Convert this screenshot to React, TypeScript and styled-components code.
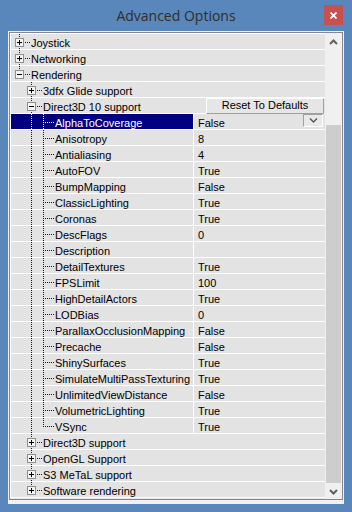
import React from "react";
import styled, { createGlobalStyle } from "styled-components";

const Global = createGlobalStyle`
  html, body { margin: 0; padding: 0; background: #5a87bb; }
  body { width: 352px; height: 512px; overflow: hidden; font-family: "Liberation Sans", Arial, sans-serif; }
`;

const Window = styled.div`
  width: 352px;
  height: 512px;
  box-sizing: border-box;
  background: #5a87bb;
  display: flex;
  flex-direction: column;
  padding: 0 8px 8px;
`;

const TitleBar = styled.div`
  height: 31px;
  flex: none;
  display: grid;
  grid-template-columns: 1fr auto 1fr;
  align-items: start;
`;

const Title = styled.div`
  grid-column: 2;
  font-family: "Open Sans", "Noto Sans", sans-serif;
  font-size: 14px;
  line-height: 31px;
  color: #2e2e2e;
  white-space: nowrap;
`;

const CloseButton = styled.div`
  grid-column: 3;
  justify-self: end;
  margin-top: 5px;
  margin-right: 1px;
  width: 19px;
  height: 20px;
  background: #c75050;
  display: flex;
  align-items: center;
  justify-content: center;
`;

const Client = styled.div`
  flex: 1;
  min-height: 0;
  background: #f0f0f0;
  padding: 1px 1px 4px 1px;
  display: flex;
`;

const Panel = styled.div`
  flex: 1;
  border: 1px solid #828790;
  display: flex;
  min-height: 0;
`;

const List = styled.div`
  flex: 1;
  border-top: 1px solid #fff;
  background: #e3e3e3;
  display: flex;
  flex-direction: column;
  overflow: hidden;
`;

const Row = styled.div`
  display: flex;
  flex: none;
  height: 16px;
  box-sizing: border-box;
  border-bottom: 1px solid #fff;
  border-left: 1px solid #fff;
  background: #e3e3e3;
  font-size: 11px;
  color: #000;
`;

const NameCell = styled.div<{ $selected?: boolean; $wide?: boolean }>`
  display: flex;
  align-items: flex-start;
  ${(p) => (p.$wide ? "flex: 1;" : "width: 182px; flex: none;")}
  background: ${(p) => (p.$selected ? "#000080" : "transparent")};
  color: ${(p) => (p.$selected ? "#fff" : "#000")};
  min-width: 0;
`;

const Label = styled.span`
  line-height: 14px;
  padding-top: 2px;
  white-space: nowrap;
`;

const ValueCell = styled.div`
  flex: 1;
  display: flex;
  align-items: flex-start;
  justify-content: space-between;
  border-left: 1px solid #fff;
  padding-left: 4px;
`;

const DropButton = styled.div`
  width: 18px;
  height: 11px;
  margin-right: 2px;
  border: 1px solid;
  border-color: #a0a0a0 #fff #fff #a0a0a0;
  background: #e9e9e9;
  display: flex;
  align-items: center;
  justify-content: center;
`;

const ResetButton = styled.div`
  width: 116px;
  height: 14px;
  margin-right: 1px;
  border: 1px solid;
  border-color: #fff #a0a0a0 #a0a0a0 #fff;
  background: #e6e6e6;
  font-size: 11px;
  line-height: 13px;
  text-align: center;
  white-space: nowrap;
  color: #000;
`;

const ScrollBar = styled.div`
  width: 17px;
  flex: none;
  background: #f0f0f0;
  display: flex;
  flex-direction: column;
`;

const ScrollArrow = styled.div`
  height: 17px;
  flex: none;
  display: flex;
  align-items: center;
  justify-content: center;
`;

const Track = styled.div`
  flex: 1;
  display: flex;
  flex-direction: column;
  padding-top: 75px;
`;

const Thumb = styled.div`
  height: 358px;
  margin: 0 1px;
  background: #cdcdcd;
`;

type Item = {
  label: string;
  level: number;
  node?: boolean;
  expanded?: boolean;
  hasNext: boolean;
  cont: boolean[];
  value?: string;
  selected?: boolean;
  reset?: boolean;
};

const props: [string, string][] = [
  ["AlphaToCoverage", "False"],
  ["Anisotropy", "8"],
  ["Antialiasing", "4"],
  ["AutoFOV", "True"],
  ["BumpMapping", "False"],
  ["ClassicLighting", "True"],
  ["Coronas", "True"],
  ["DescFlags", "0"],
  ["Description", ""],
  ["DetailTextures", "True"],
  ["FPSLimit", "100"],
  ["HighDetailActors", "True"],
  ["LODBias", "0"],
  ["ParallaxOcclusionMapping", "False"],
  ["Precache", "False"],
  ["ShinySurfaces", "True"],
  ["SimulateMultiPassTexturing", "True"],
  ["UnlimitedViewDistance", "False"],
  ["VolumetricLighting", "True"],
  ["VSync", "True"],
];

const items: Item[] = [
  { label: "Joystick", level: 0, node: true, hasNext: true, cont: [] },
  { label: "Networking", level: 0, node: true, hasNext: true, cont: [] },
  { label: "Rendering", level: 0, node: true, expanded: true, hasNext: false, cont: [] },
  { label: "3dfx Glide support", level: 1, node: true, hasNext: true, cont: [false] },
  { label: "Direct3D 10 support", level: 1, node: true, expanded: true, hasNext: true, cont: [false], reset: true },
  ...props.map(([label, value], i) => ({
    label,
    value,
    level: 2,
    hasNext: i < props.length - 1,
    cont: [false, true],
    selected: i === 0,
  })),
  { label: "Direct3D support", level: 1, node: true, hasNext: true, cont: [false] },
  { label: "OpenGL Support", level: 1, node: true, hasNext: true, cont: [false] },
  { label: "S3 MeTaL support", level: 1, node: true, hasNext: true, cont: [false] },
  { label: "Software rendering", level: 1, node: true, hasNext: false, cont: [false] },
];

function Gutter({ item }: { item: Item }) {
  const w = 20 + 12 * item.level;
  const cx = 8 + 12 * item.level;
  const col = item.selected ? "#ffffff" : "#1a1a1a";
  const segs: React.ReactNode[] = [];
  const dot = { stroke: col, strokeWidth: 1, strokeDasharray: "1 1" };
  item.cont.forEach((c, a) => {
    if (c) {
      const x = 8 + 12 * a + 0.5;
      segs.push(<line key={"c" + a} x1={x} y1={0} x2={x} y2={16} {...dot} />);
    }
  });
  const x = cx + 0.5;
  if (item.node) {
    segs.push(<line key="t" x1={x} y1={0} x2={x} y2={4} {...dot} />);
    if (item.hasNext) segs.push(<line key="b" x1={x} y1={14} x2={x} y2={16} {...dot} />);
    segs.push(<line key="h" x1={cx + 6} y1={8.5} x2={w - 1} y2={8.5} {...dot} />);
    segs.push(
      <rect key="box" x={cx - 4 + 0.5} y={4.5} width={8} height={8} fill="#f4f4f4" stroke="#8e8f8f" />
    );
    segs.push(<line key="m" x1={cx - 2} y1={8.5} x2={cx + 3} y2={8.5} stroke="#000" />);
    if (!item.expanded) segs.push(<line key="p" x1={x} y1={6} x2={x} y2={11} stroke="#000" />);
  } else {
    segs.push(<line key="t" x1={x} y1={0} x2={x} y2={item.hasNext ? 16 : 9} {...dot} />);
    segs.push(<line key="h" x1={cx + 2} y1={8.5} x2={w - 1} y2={8.5} {...dot} />);
  }
  return (
    <svg width={w} height={16} style={{ flex: "none", overflow: "visible" }} shapeRendering="crispEdges">
      {segs}
    </svg>
  );
}

function TreeRow({ item }: { item: Item }) {
  const isProp = item.value !== undefined;
  return (
    <Row>
      <NameCell $selected={item.selected} $wide={!isProp}>
        <Gutter item={item} />
        <Label>{item.label}</Label>
      </NameCell>
      {item.reset && <ResetButton>Reset To Defaults</ResetButton>}
      {isProp && (
        <ValueCell>
          <Label>{item.value}</Label>
          {item.selected && (
            <DropButton>
              <svg width="9" height="5" viewBox="0 0 9 5">
                <path d="M1 0.5 L4.5 4 L8 0.5" fill="none" stroke="#555" strokeWidth="1.4" />
              </svg>
            </DropButton>
          )}
        </ValueCell>
      )}
    </Row>
  );
}

export default function App() {
  return (
    <>
      <Global />
      <Window>
        <TitleBar>
          <Title>Advanced Options</Title>
          <CloseButton>
            <svg width="7" height="7" viewBox="0 0 7 7">
              <path d="M0.5 0.5 L6.5 6.5 M6.5 0.5 L0.5 6.5" stroke="#fff" strokeWidth="1.8" />
            </svg>
          </CloseButton>
        </TitleBar>
        <Client>
          <Panel>
            <List>
              {items.map((it, i) => (
                <TreeRow key={i} item={it} />
              ))}
            </List>
            <ScrollBar>
              <ScrollArrow>
                <svg width="9" height="6" viewBox="0 0 9 6">
                  <path d="M1 5 L4.5 1.5 L8 5" fill="none" stroke="#606060" strokeWidth="2" />
                </svg>
              </ScrollArrow>
              <Track>
                <Thumb />
              </Track>
              <ScrollArrow>
                <svg width="9" height="6" viewBox="0 0 9 6">
                  <path d="M1 1 L4.5 4.5 L8 1" fill="none" stroke="#606060" strokeWidth="2" />
                </svg>
              </ScrollArrow>
            </ScrollBar>
          </Panel>
        </Client>
      </Window>
    </>
  );
}
